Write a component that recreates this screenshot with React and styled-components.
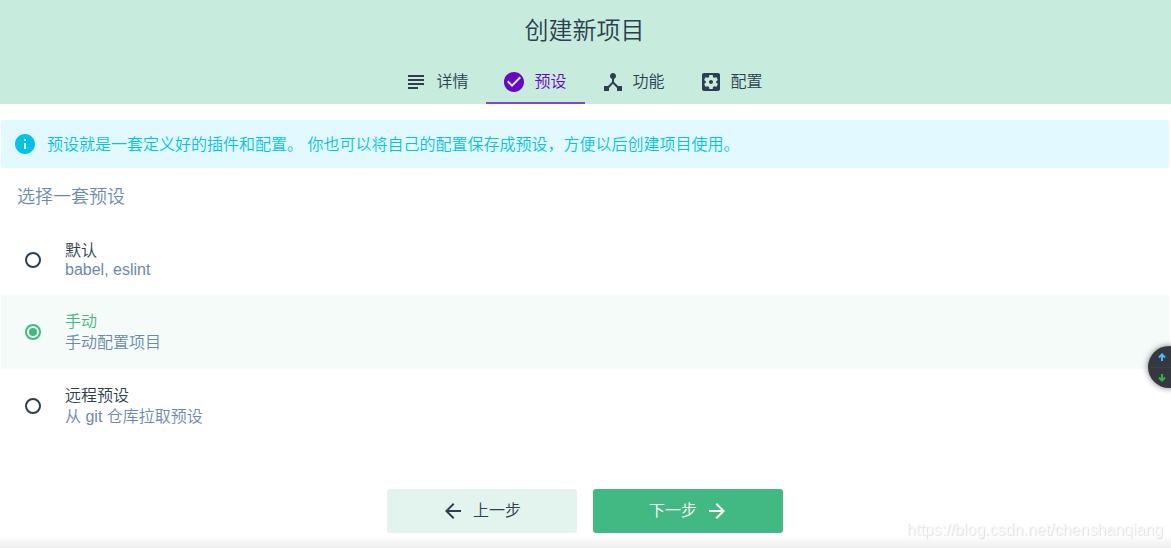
import React, { useState } from "react";
import styled, { createGlobalStyle, css } from "styled-components";

const GlobalStyle = createGlobalStyle`
  *, *::before, *::after { box-sizing: border-box; }
  body {
    margin: 0;
    background: #fff;
    color: #2c3e50;
    font-family: "Liberation Sans", "Noto Sans CJK SC", sans-serif;
    font-size: 16px;
    font-weight: 350;
  }
  button, input { font: inherit; color: inherit; }
`;

const Page = styled.div`
  display: flex;
  flex-direction: column;
  min-height: 100vh;
`;

const Header = styled.header`
  padding-right: 2px;
  background: #c7ebdd;
`;

const Title = styled.h1`
  margin: 0;
  padding: 13px 0 11px;
  font-size: 24px;
  line-height: 36px;
  font-weight: 350;
  text-align: center;
`;

const Tabs = styled.nav`
  display: flex;
  justify-content: center;
`;

const Tab = styled.button`
  display: flex;
  align-items: center;
  gap: 8px;
  height: 44px;
  padding: 0 18px 0 16px;
  border: 0;
  background: none;
  line-height: 24px;
  cursor: pointer;
  color: ${(p) => (p.$active ? "#6806c1" : "#2c3e50")};
  ${(p) => p.$active && css`box-shadow: inset 0 -2px #8644cb;`}
`;

const Icon = styled.svg`
  width: 24px;
  height: 24px;
  flex: none;
  fill: currentColor;
`;

const Main = styled.main`
  flex: 1;
  padding: 16px 2px 0 1px;
`;

const Info = styled.p`
  display: flex;
  align-items: flex-start;
  gap: 10px;
  margin: 0;
  padding: 12px 12px 10px;
  border-radius: 3px;
  background: #e2f9ff;
  color: #03c2e6;
  line-height: 26px;
`;

const PresetGroup = styled.fieldset`
  margin: 0;
  padding: 0;
  border: 0;
  min-width: 0;
`;

const Legend = styled.legend`
  padding: 17px 16px 15px;
  color: #6b8ab0;
  font-size: 18px;
  line-height: 24px;
`;

const Preset = styled.label`
  display: flex;
  align-items: center;
  gap: 24px;
  padding: 16px 24px;
  cursor: pointer;
  background: ${(p) => (p.$selected ? "#f4fbf8" : "transparent")};
`;

const Radio = styled.input`
  appearance: none;
  display: grid;
  place-items: center;
  flex: none;
  width: 16px;
  height: 16px;
  margin: 0;
  border: 2px solid #2c3e50;
  border-radius: 50%;
  &:checked { border-color: #42b983; }
  &:checked::before {
    content: "";
    width: 8px;
    height: 8px;
    border-radius: 50%;
    background: #42b983;
  }
`;

const PresetText = styled.span`
  display: flex;
  flex-direction: column;
`;

const PresetName = styled.span`
  line-height: 21px;
  color: ${(p) => (p.$selected ? "#42b983" : "#2c3e50")};
`;

const PresetDescription = styled.span`
  line-height: ${(p) => (p.$compact ? "18px" : "21px")};
  color: #6b8ab0;
`;

const Footer = styled.footer`
  display: flex;
  justify-content: center;
  gap: 16px;
  padding: 16px 2px 15px 1px;
  background: linear-gradient(to top, #eeeeee, #ffffff 12px);
`;

const Button = styled.button`
  display: flex;
  align-items: center;
  justify-content: center;
  gap: 8px;
  width: 190px;
  height: 44px;
  padding: ${(p) => (p.$primary ? "0 0 0 2px" : "0 2px 0 0")};
  border: 0;
  border-radius: 3px;
  line-height: 24px;
  cursor: pointer;
  background: ${(p) => (p.$primary ? "#42b983" : "#e3f4ee")};
  color: ${(p) => (p.$primary ? "#fff" : "#2c3e50")};
`;

const SpeedBadge = styled.aside`
  position: fixed;
  top: 346px;
  right: -19px;
  width: 42px;
  height: 42px;
  overflow: hidden;
  border-radius: 50%;
  background: #343840;
  box-shadow: 0 0 6px rgba(0, 0, 0, 0.5);
`;

const SpeedRow = styled.div`
  display: flex;
  align-items: center;
  height: 21px;
  padding-left: 10px;
  color: ${(p) => p.$color};
  & + & { border-top: 1px solid #3c4048; }
`;

const SpeedArrow = styled.svg`
  width: 8px;
  height: 8px;
  fill: none;
  stroke: currentColor;
  stroke-width: 2;
`;

const Watermark = styled.div`
  position: fixed;
  right: 8px;
  bottom: 8px;
  line-height: 20px;
  font-size: 16px;
  color: #f8f8f8;
  text-shadow: 1px 1px 1px #dedede;
  pointer-events: none;
`;

const paths = {
  subject: "M14 17H4v2h10v-2zm6-8H4v2h16V9zM4 15h16v-2H4v2zM4 5v2h16V5H4z",
  check: "M12 2C6.48 2 2 6.48 2 12s4.48 10 10 10 10-4.48 10-10S17.52 2 12 2zm-2 15l-5-5 1.41-1.41L10 14.17l7.59-7.59L19 8l-9 9z",
  hub: "M17 16l-4-4V8.82C14.16 8.4 15 7.3 15 6c0-1.66-1.34-3-3-3S9 4.34 9 6c0 1.3.84 2.4 2 2.82V12l-4 4H3v5h5v-3.05l4-4.2 4 4.2V21h5v-5h-4z",
  settings: "M12 10c-1.1 0-2 .9-2 2s.9 2 2 2 2-.9 2-2-.9-2-2-2zm7-7H5c-1.11 0-2 .9-2 2v14c0 1.1.89 2 2 2h14c1.11 0 2-.9 2-2V5c0-1.1-.89-2-2-2zm-1.75 9c0 .23-.02.46-.05.68l1.48 1.16c.13.11.17.3.08.45l-1.4 2.42c-.09.15-.27.21-.43.15l-1.74-.7c-.36.28-.76.51-1.18.69l-.26 1.85c-.03.17-.18.3-.35.3h-2.8c-.17 0-.32-.13-.35-.29l-.26-1.85c-.43-.18-.82-.41-1.18-.69l-1.74.7c-.16.06-.34 0-.43-.15l-1.4-2.42c-.09-.15-.05-.34.08-.45l1.48-1.16c-.03-.23-.05-.46-.05-.69 0-.23.02-.46.05-.68l-1.48-1.16c-.13-.11-.17-.3-.08-.45l1.4-2.42c.09-.15.27-.21.43-.15l1.74.7c.36-.28.76-.51 1.18-.69l.26-1.85c.03-.17.18-.3.35-.3h2.8c.17 0 .32.13.35.29l.26 1.85c.43.18.82.41 1.18.69l1.74-.7c.16-.06.34 0 .43.15l1.4 2.42c.09.15.05.34-.08.45l-1.48 1.16c.03.23.05.46.05.69z",
  info: "M12 2C6.48 2 2 6.48 2 12s4.48 10 10 10 10-4.48 10-10S17.52 2 12 2zm1 15h-2v-6h2v6zm0-8h-2V7h2v2z",
  back: "M20 11H7.83l5.59-5.59L12 4l-8 8 8 8 1.41-1.41L7.83 13H20v-2z",
  forward: "M12 4l-1.41 1.41L16.17 11H4v2h12.17l-5.58 5.59L12 20l8-8z",
};

const MaterialIcon = ({ name }) => (
  <Icon viewBox="0 0 24 24" aria-hidden="true">
    <path d={paths[name]} />
  </Icon>
);

const tabs = [
  { icon: "subject", label: "详情" },
  { icon: "check", label: "预设" },
  { icon: "hub", label: "功能" },
  { icon: "settings", label: "配置" },
];

const presets = [
  { id: "default", name: "默认", description: "babel, eslint", compact: true },
  { id: "manual", name: "手动", description: "手动配置项目" },
  { id: "remote", name: "远程预设", description: "从 git 仓库拉取预设" },
];

export default function App() {
  const [tab, setTab] = useState(1);
  const [preset, setPreset] = useState("manual");

  return (
    <Page lang="zh-CN">
      <GlobalStyle />
      <Header>
        <Title>创建新项目</Title>
        <Tabs>
          {tabs.map((t, i) => (
            <Tab key={t.icon} type="button" $active={i === tab} onClick={() => setTab(i)}>
              <MaterialIcon name={t.icon} />
              {t.label}
            </Tab>
          ))}
        </Tabs>
      </Header>
      <Main>
        <Info>
          <MaterialIcon name="info" />
          预设就是一套定义好的插件和配置。 你也可以将自己的配置保存成预设，方便以后创建项目使用。
        </Info>
        <PresetGroup>
          <Legend>选择一套预设</Legend>
          {presets.map((p) => (
            <Preset key={p.id} $selected={p.id === preset}>
              <Radio
                type="radio"
                name="preset"
                checked={p.id === preset}
                onChange={() => setPreset(p.id)}
              />
              <PresetText>
                <PresetName $selected={p.id === preset}>{p.name}</PresetName>
                <PresetDescription $compact={p.compact}>{p.description}</PresetDescription>
              </PresetText>
            </Preset>
          ))}
        </PresetGroup>
      </Main>
      <Footer>
        <Button type="button">
          <MaterialIcon name="back" />
          上一步
        </Button>
        <Button type="button" $primary>
          下一步
          <MaterialIcon name="forward" />
        </Button>
      </Footer>
      <SpeedBadge>
        <SpeedRow $color="#4db8f5">
          <SpeedArrow viewBox="0 0 8 8" aria-hidden="true">
            <path d="M4 8V2M1 4.5L4 1.5L7 4.5" />
          </SpeedArrow>
        </SpeedRow>
        <SpeedRow $color="#33b04a">
          <SpeedArrow viewBox="0 0 8 8" aria-hidden="true">
            <path d="M4 0V6M1 3.5L4 6.5L7 3.5" />
          </SpeedArrow>
        </SpeedRow>
      </SpeedBadge>
      <Watermark>https://blog.csdn.net/chenshanqiang</Watermark>
    </Page>
  );
}
